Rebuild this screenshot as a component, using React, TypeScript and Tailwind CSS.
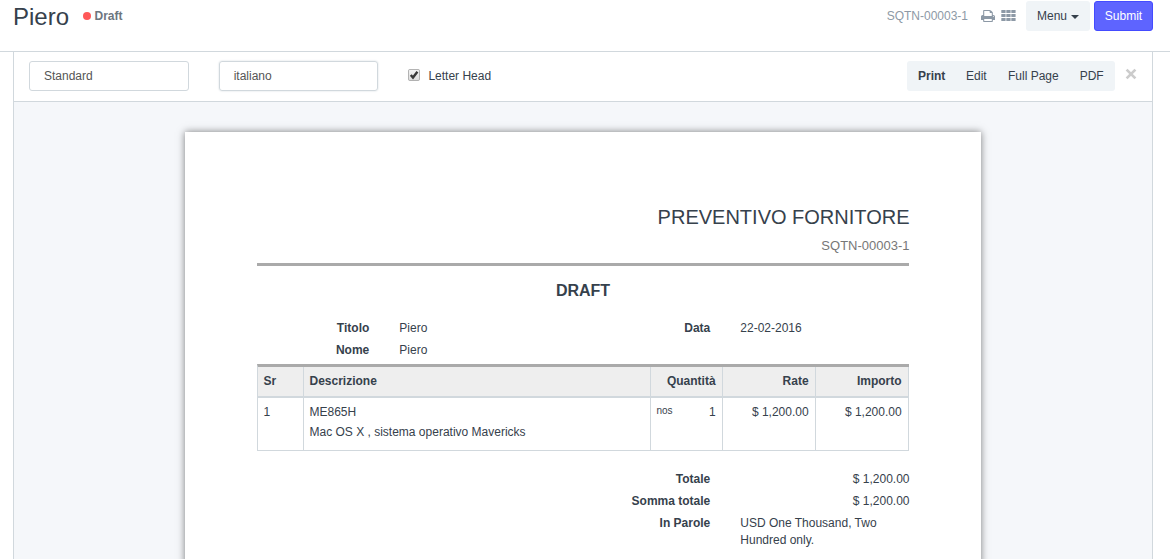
import type { ReactNode } from "react";

function PrintIcon() {
  return (
    <svg viewBox="0 0 1664 1536" preserveAspectRatio="none" className="h-[12px] w-[14px]" fill="currentColor">
      <path
        transform="translate(0 -128)"
        d="M384 1536h896v-256h-896v256zM384 896h896v-384h-160q-40 0-68-28t-28-68v-160h-640v640zM1536 960q0-26-19-45t-45-19-45 19-19 45 19 45 45 19 45-19 19-45zM1664 960v416q0 13-9.5 22.5t-22.5 9.5h-224v160q0 40-28 68t-68 28h-960q-40 0-68-28t-28-68v-160h-224q-13 0-22.5-9.5t-9.5-22.5v-416q0-79 56.5-135.5t135.5-56.5h64v-544q0-40 28-68t68-28h672q40 0 88 20t76 48l152 152q28 28 48 76t20 88v256h64q79 0 135.5 56.5t56.5 135.5z"
      />
    </svg>
  );
}

function GridIcon() {
  return (
    <svg viewBox="0 0 15 11" className="h-[11px] w-[15px]" fill="currentColor">
      {[0, 4, 8].map((y) =>
        [0.3, 5.3, 10.3].map((x) => <rect key={`${x}-${y}`} x={x} y={y} width="4.3" height="3.1" rx="0.5" />),
      )}
    </svg>
  );
}

function CloseIcon() {
  return (
    <svg viewBox="0 0 12 12" className="h-[12px] w-[12px]">
      <path d="M1.6 1.6L10.4 10.4M10.4 1.6L1.6 10.4" stroke="#cccccc" strokeWidth="2.7" />
    </svg>
  );
}

function Field({ label, children, right }: { label: string; children: ReactNode; right?: boolean }) {
  return (
    <div className="mb-[5px] flex leading-[17px]">
      <div className="w-[112.3px] text-right font-bold">{label}</div>
      <div className={right ? "-mr-[0.5px] ml-[30px] flex-1 text-right" : "ml-[30px] flex-1"}>{children}</div>
    </div>
  );
}

export default function App() {
  return (
    <div className="flex h-[559px] w-[1170px] flex-col overflow-hidden bg-white font-['Liberation_Sans',Arial,sans-serif] text-[12px] leading-[17px] text-[#36414c]">
      <header className="flex h-[52px] shrink-0 items-start border-b border-[#d1d8dd] pr-[17px] pl-[13px]">
        <h1 className="mt-[1px] text-[24px] leading-[32px]">Piero</h1>
        <div className="mt-[8px] ml-[14px] flex items-center font-bold text-[#6c7680]">
          <span className="mr-[3.5px] -mt-[1px] size-2 rounded-full bg-[#ff5858]" />
          Draft
        </div>
        <div className="ml-auto flex items-start text-[#36414c]">
          <span className="mt-[8px] text-[#8d99a6]">SQTN-00003-1</span>
          <span className="mt-[10px] ml-[13px] text-[#8d99a6]"><PrintIcon /></span>
          <span className="mt-[10px] ml-[6px] text-[#8d99a6]"><GridIcon /></span>
          <button className="mt-[1px] ml-[10px] flex h-[30px] w-16 items-center justify-center gap-1 rounded-[3px] bg-[#f0f4f7]">
            Menu
            <svg viewBox="0 0 8 4" className="mt-[2px] h-1 w-2" fill="currentColor"><path d="M0 0h8L4 4z" /></svg>
          </button>
          <button className="mt-[1px] ml-1 h-[30px] w-[59px] rounded-[3px] border border-[#444bff] bg-[#5e64ff] text-white">Submit</button>
        </div>
      </header>

      <main className="ml-[13px] flex w-[1140px] flex-1 flex-col border-x border-[#d1d8dd]">
        <div className="flex h-[50px] shrink-0 items-start border-b border-[#d1d8dd] pt-[9px] pl-[15px]">
          <div className="flex h-[30px] w-[160px] items-center rounded-[3px] border border-[#d1d8dd] pl-[14px] text-[#555]">Standard</div>
          <div className="ml-[30px] flex h-[30px] w-[159px] items-center rounded-[3px] border border-[#d1d8dd] pl-[13.7px] text-[#555] shadow-[0_0_2px_#d1d8dd]">italiano</div>
          <label className="mt-[7px] ml-[30px] flex">
            <svg viewBox="0 0 13 13" className="mt-[1px] mr-[8.4px] h-[12px] w-[12px]">
              <defs>
                <linearGradient id="box" x1="0" y1="0" x2="0" y2="1">
                  <stop offset="0" stopColor="#f4f4f4" />
                  <stop offset="1" stopColor="#dcdcdc" />
                </linearGradient>
              </defs>
              <rect x="0.5" y="0.5" width="12" height="12" rx="1.5" fill="url(#box)" stroke="#a9a9a9" />
              <path d="M3 6.4L5.4 9.2L10.2 3" fill="none" stroke="#393939" strokeWidth="2.6" />
            </svg>
            Letter Head
          </label>
          <nav className="ml-auto flex h-[30px] w-[208px] items-center rounded-[3px] bg-[#f0f4f7] pl-[11px]">
            <span className="w-[48px] font-bold">Print</span>
            <span className="w-[42px]">Edit</span>
            <span className="w-[71.7px]">Full Page</span>
            <span>PDF</span>
          </nav>
          <button className="mt-[7px] mr-[15px] ml-[10px]"><CloseIcon /></button>
        </div>

        <div className="flex flex-1 justify-center overflow-hidden bg-[#f5f7fa] pt-[30px]">
          <article className="h-[460px] w-[796px] shrink-0 bg-white px-[72px] pt-[74px] shadow-[0_0_7.5px_rgba(0,0,0,0.5)]">
            <h2 className="-mr-[0.5px] text-right text-[20px] leading-[22px]">PREVENTIVO FORNITORE</h2>
            <div className="mt-[9px] h-[29px] border-b-[3px] border-[#aaa] text-right text-[13px] leading-[18px] text-[#777]">
              <span className="-mr-[0.5px]">SQTN-00003-1</span>
            </div>
            <h4 className="mt-[16px] text-center text-[16px] leading-[18px] font-bold">DRAFT</h4>
            <div className="mt-5 flex">
              <div className="w-[341px]">
                <Field label="Titolo">Piero</Field>
                <Field label="Nome">Piero</Field>
              </div>
              <div className="flex-1">
                <Field label="Data">22-02-2016</Field>
              </div>
            </div>

            <table className="w-[652px] table-fixed border-separate border-spacing-0 border-t-[3px] border-l border-t-[#aaa] border-l-[#d1d8dd]">
              <colgroup>
                <col className="w-[46px]" />
                <col className="w-[347px]" />
                <col className="w-[72px]" />
                <col className="w-[93px]" />
                <col className="w-[93px]" />
              </colgroup>
              <thead>
                <tr className="h-[31px] bg-[#eee] [&>th]:border-r [&>th]:border-b-2 [&>th]:border-[#d1d8dd] [&>th]:pr-[6.4px] [&>th]:pl-[5.5px] [&>th]:pt-[6px] [&>th]:pb-[6px]">
                  <th className="text-left">Sr</th>
                  <th className="text-left">Descrizione</th>
                  <th className="text-right">Quantità</th>
                  <th className="text-right">Rate</th>
                  <th className="text-right">Importo</th>
                </tr>
              </thead>
              <tbody>
                <tr className="h-[53px] align-top [&>td]:border-r [&>td]:border-b [&>td]:border-[#d1d8dd] [&>td]:pr-[6.4px] [&>td]:pl-[5.5px] [&>td]:pt-[6px]">
                  <td>1</td>
                  <td>
                    <div>ME865H</div>
                    <div className="mt-[3px]">Mac OS X , sistema operativo Mavericks</div>
                  </td>
                  <td>
                    <div className="flex justify-between">
                      <small className="text-[10px] leading-[14px]">nos</small>1
                    </div>
                  </td>
                  <td className="text-right">$ 1,200.00</td>
                  <td className="text-right">$ 1,200.00</td>
                </tr>
              </tbody>
            </table>

            <div className="mt-5 ml-[341px]">
              <Field label="Totale" right>$ 1,200.00</Field>
              <Field label="Somma totale" right>$ 1,200.00</Field>
              <Field label="In Parole">USD One Thousand, Two<br />Hundred only.</Field>
            </div>
          </article>
        </div>
      </main>
    </div>
  );
}
